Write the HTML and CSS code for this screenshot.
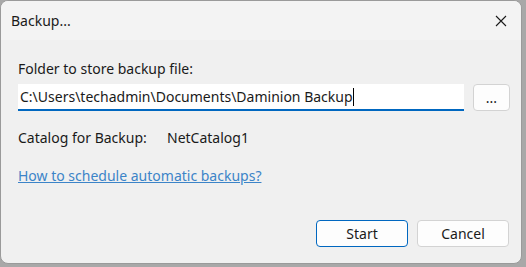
FILE: index.html
```html
<!doctype html><html lang="en">
<head><meta charset="utf-8"/><title>Backup...</title>
<meta name="viewport" content="width=device-width, initial-scale=1">
<link rel="stylesheet" href="styles.css">
</head>
<body>
<div class="dlg">
	<div class="titlebar">
		<span class="caption">Backup...</span>
		<span class="close">
			<svg width="12" height="12" viewBox="0 0 12 12"><path d="M1 1L11 11M11 1L1 11" stroke="#1a1a1a" stroke-width="1.1" fill="none"/></svg>
		</span>
	</div>
	<div class="body">
		<div class="lbl">Folder to store backup file:</div>
		<div class="pathrow">
			<div class="path">C:\Users\techadmin\Documents\Daminion Backup<span class="caret"></span></div>
			<button class="btn browse" type="button">...</button>
		</div>
		<div class="catalog"><span class="cat_lbl">Catalog for Backup:</span><span>NetCatalog1</span></div>
		<a class="link" href="#">How to schedule automatic backups?</a>
		<div class="btns">
			<button class="btn dflt" type="button">Start</button>
			<button class="btn" type="button">Cancel</button>
		</div>
	</div>
</div>
</body></html>
```

FILE: styles.css
```css
html, body {margin: 0; padding: 0;}
body {
	background: #a8a8a8;
	font-family: "Noto Sans", "Liberation Sans", sans-serif;
	font-size: 14px;
	color: #1a1a1a;
	width: 526px;
	height: 267px;
	overflow: hidden;
}

.dlg {
	width: 522px;
	height: 264px;
	box-sizing: border-box;
	border: 1px solid #9a9a9a;
	border-radius: 8px;
	background: #f0f0f0;
	overflow: hidden;
	display: flex;
	flex-direction: column;
}

.titlebar {
	height: 39px;
	background: #f3f3f3;
	display: flex;
	align-items: center;
	justify-content: space-between;
	padding-left: 10px;
}
.caption {font-size: 14px;}
.close {
	width: 46px;
	height: 39px;
	display: flex;
	align-items: center;
	justify-content: center;
	margin-right: -3px;
}

.body {
	flex: 1;
	display: flex;
	flex-direction: column;
	padding: 19px 11px 0 17px;
}

.lbl {line-height: 20px;}

.pathrow {
	display: flex;
	gap: 9px;
	margin-top: 5px;
}
.path {
	flex: 1;
	height: 25px;
	background: #fff;
	border-bottom: 2px solid #0067c0;
	box-sizing: content-box;
	padding-left: 2px;
	line-height: 25px;
	white-space: nowrap;
	font-size: 14px;
}
.caret {
	display: inline-block;
	width: 1px;
	height: 18px;
	background: #000;
	vertical-align: -4px;
}

.btn {
	font-family: inherit;
	font-size: 14px;
	color: #1a1a1a;
	background: #fdfdfd;
	border: 1px solid #d3d3d3;
	border-radius: 4px;
	padding: 0;
	height: 27px;
}
.browse {width: 37px; height: 27px; line-height: 20px;}
.dflt {border-color: #0067c0;}

.catalog {
	margin-top: 16px;
	line-height: 22px;
}
.cat_lbl {display: inline-block; width: 149px;}

.link {
	margin-top: 16px;
	line-height: 22px;
	color: #3c84c8;
	text-decoration: underline;
	align-self: flex-start;
}

.btns {
	margin-top: auto;
	margin-bottom: 16px;
	margin-right: 1px;
	display: flex;
	justify-content: flex-end;
	gap: 9px;
}
.btns .btn {width: 92px;}
```
